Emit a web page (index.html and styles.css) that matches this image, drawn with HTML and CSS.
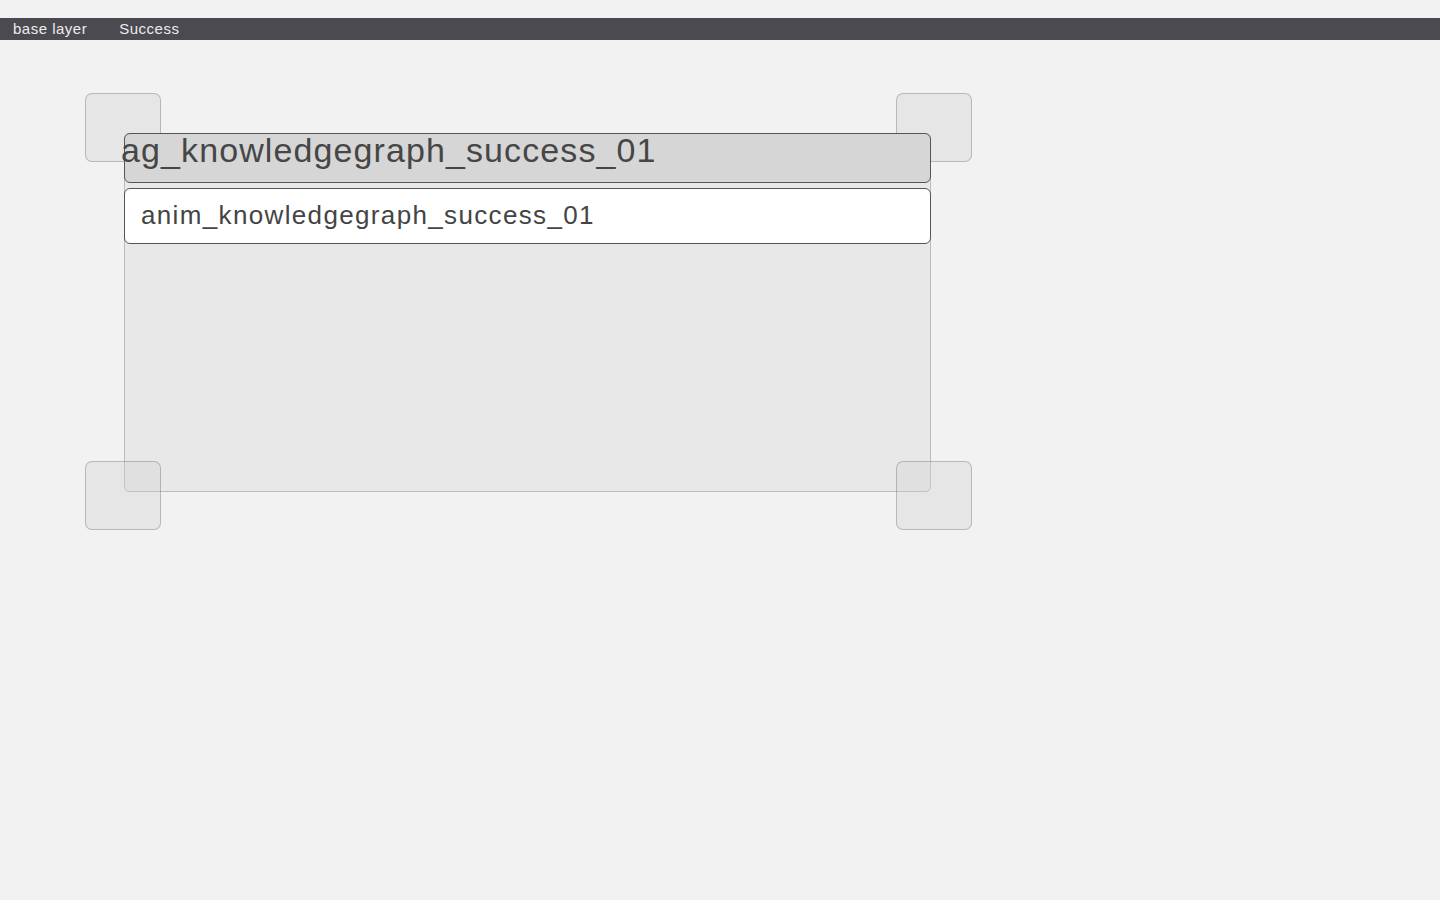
FILE: index.html
```html
<!DOCTYPE html>
<html>
<head>
<meta charset="utf-8">
<link rel="stylesheet" href="styles.css">
</head>
<body>
<div class="topbar">
  <span class="crumb">base layer</span>
  <span class="crumb">Success</span>
</div>
<div class="stage">
  <div class="panel">
    <div class="header"><span class="header-text">ag_knowledgegraph_success_01</span></div>
    <div class="field">anim_knowledgegraph_success_01</div>
  </div>
  <div class="handle h-tl"></div>
  <div class="handle h-tr"></div>
  <div class="handle h-bl"></div>
  <div class="handle h-br"></div>
</div>
</body>
</html>
```
FILE: styles.css
```css
html, body {
  margin: 0;
  padding: 0;
  background: #f2f2f2;
  font-family: "Liberation Sans", Arial, sans-serif;
}
body {
  min-height: 900px;
}
.topbar {
  margin-top: 18px;
  height: 22px;
  background: #4b4a50;
  display: flex;
  align-items: center;
  gap: 32px;
  padding-left: 13px;
}
.crumb {
  color: #ececec;
  font-size: 15px;
  line-height: 22px;
  letter-spacing: 0.5px;
}
.stage {
  position: relative;
  padding-top: 93px;
  padding-left: 124px;
  padding-bottom: 60px;
}
.panel {
  width: 805px;
  height: 357px;
  background: #e8e8e8;
  border: 1px solid #bcbcbc;
  border-radius: 5px;
  display: flex;
  flex-direction: column;
  gap: 5px;
}
.header {
  margin: -1px -1px 0 -1px;
  height: 48px;
  background: #d6d6d6;
  border: 1px solid #555;
  border-radius: 6px;
  position: relative;
  z-index: 3;
}
.header-text {
  display: block;
  margin-left: -4px;
  font-size: 34px;
  line-height: 32px;
  letter-spacing: 1.1px;
  color: #464646;
  white-space: nowrap;
}
.field {
  margin: 0 -1px;
  background: #fff;
  border: 1px solid #555;
  border-radius: 6px;
  box-sizing: border-box;
  height: 56px;
  padding-left: 16px;
  font-size: 26px;
  line-height: 53px;
  letter-spacing: 1.35px;
  color: #444;
  position: relative;
  z-index: 3;
}
.handle {
  position: absolute;
  width: 74px;
  height: 67px;
  border: 1px solid rgba(0,0,0,0.2);
  border-radius: 7px;
  background: rgba(210,210,210,0.35);
  z-index: 2;
}
.h-tl { left: 85px; top: 53px; }
.h-tr { left: 896px; top: 53px; }
.h-bl { left: 85px; top: 421px; }
.h-br { left: 896px; top: 421px; }
```
